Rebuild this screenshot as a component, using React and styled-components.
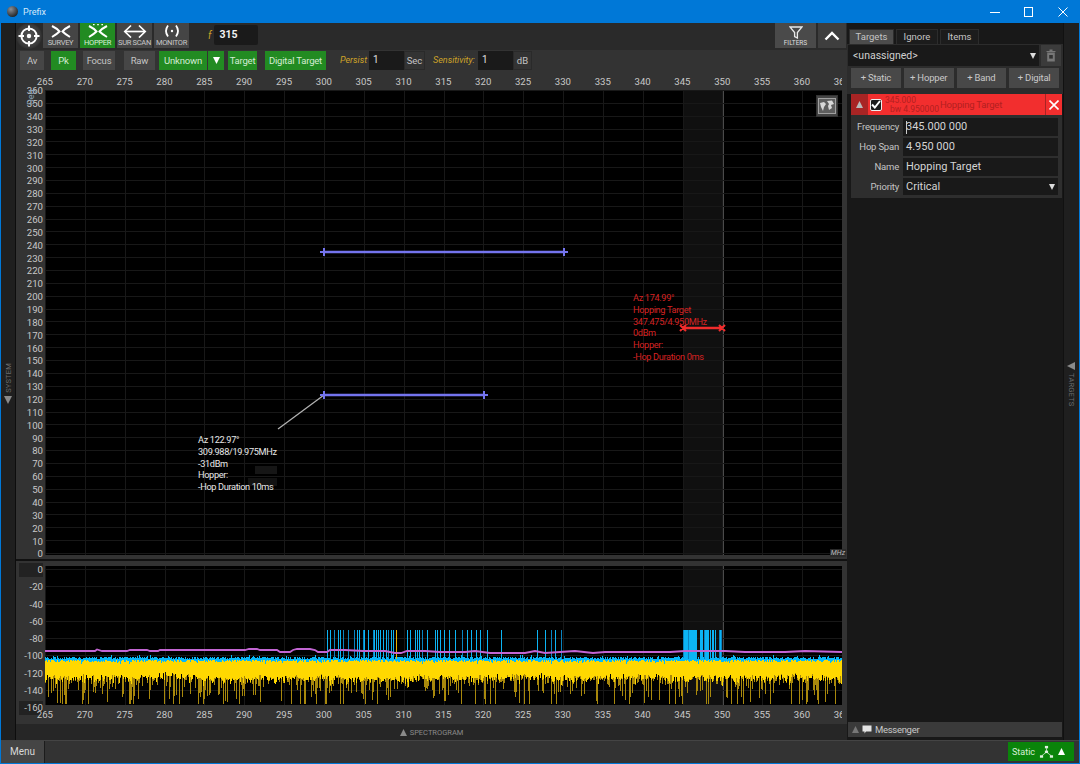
import { useMemo } from "react"
import styled, { createGlobalStyle } from "styled-components"

const GlobalStyle = createGlobalStyle`
  html, body { margin: 0; padding: 0; background: #0078d7; }
  * { box-sizing: border-box; }
`

const FONT = `Roboto, "Noto Sans", sans-serif`
const MHZ_STEP = 39.85
const freqs = Array.from({ length: 21 }, (_, i) => 265 + i * 5)
const degs = Array.from({ length: 37 }, (_, i) => 360 - i * 10)
const dbs = Array.from({ length: 9 }, (_, i) => -i * 20)

// pixel x inside the plot for a frequency
const fx = (f) => (f - 265) * (MHZ_STEP / 5)

const SPIKES = [82, 90, 103, 114, 120, 128, 145, 162, 172, 178, 188, 192, 205, 218, 222, 228, 235, 240, 248, 258,
  265, 272, 280, 322, 330, 345, 350, 358, 365, 380, 405, 412, 420, 432, 448, 465, 485, 500, 512, 527, 540, 562,
  603, 712, 735, 752, 765, 782]

const PINK = [[0, 85], [50, 85], [52, 83.5], [57, 85], [82, 85], [85, 84], [102, 84], [105, 85], [113, 85], [115, 84],
  [200, 84], [204, 83], [212, 83], [215, 84], [232, 84], [235, 86], [245, 86], [248, 84], [252, 83], [265, 83],
  [270, 84], [273, 86], [282, 86], [285, 84], [300, 84], [318, 85], [325, 85], [340, 85], [350, 87], [356, 87],
  [362, 85], [380, 85], [395, 86], [420, 86], [430, 85], [445, 87], [480, 87], [490, 85], [500, 87], [515, 86],
  [530, 85], [548, 87], [560, 86], [580, 86], [600, 86], [625, 86], [640, 85], [680, 85], [700, 86], [740, 86],
  [760, 85], [797, 86]]

function makeRandom(seed) {
  let a = seed
  return () => {
    a = (a + 0x6d2b79f5) | 0
    let t = Math.imul(a ^ (a >>> 15), 1 | a)
    t = (t + Math.imul(t ^ (t >>> 7), 61 | t)) ^ t
    return ((t ^ (t >>> 14)) >>> 0) / 4294967296
  }
}

function buildSpectrum() {
  const r = makeRandom(315)
  let cyan = ""
  let yellow = ""
  let dim = ""
  let drift = 0
  for (let x = 0; x < 797; x++) {
    const px = x + 0.5
    drift = drift * 0.9 + (r() - 0.5) * 1.6
    const top = 93.5 + r() * 2.5 + (r() > 0.95 ? 2 : 0)
    const cyanTop = 90.5 + r() * 2.5 - (r() > 0.93 ? 2 : 0)
    const bottom = 109 + drift + r() * 6 + (r() > 0.8 ? r() * 5 : 0)
    const tail = bottom + Math.pow(r(), 4) * 32
    cyan += `M${px} ${cyanTop.toFixed(1)}V${top.toFixed(1)}`
    yellow += `M${px} ${top.toFixed(1)}V${bottom.toFixed(1)}`
    dim += `M${px} ${bottom.toFixed(1)}V${Math.min(tail, 138).toFixed(1)}`
  }
  return { cyan, yellow, dim }
}

const Window = styled.div`
  width: 1080px;
  height: 764px;
  background: #0078d7;
  display: flex;
  flex-direction: column;
  overflow: hidden;
  font-family: ${FONT};
  color: #cfcfcf;
`
const TitleBar = styled.div`
  height: 23px;
  flex: none;
  display: flex;
  align-items: center;
  padding-left: 7px;
  gap: 5px;
  font-size: 9px;
  color: #d5e8fa;
`
const AppIcon = styled.div`
  width: 11px;
  height: 11px;
  border-radius: 50%;
  background: radial-gradient(circle at 35% 30%, #8a8f96, #24272b 75%);
`
const WindowControls = styled.div`
  margin-left: auto;
  display: flex;
`
const WindowControl = styled.div`
  width: 34px;
  height: 23px;
  display: flex;
  align-items: center;
  justify-content: center;
`
const Body = styled.div`
  height: 717px;
  flex: none;
  display: flex;
  padding: 0 1px;
`
const Rail = styled.div`
  width: 15px;
  flex: none;
  background: #1f1f1f;
  border-right: 1px solid ${(p) => (p.$side === "left" ? "#0d0d0d" : "#1f1f1f")};
  display: flex;
  flex-direction: column;
  align-items: center;
  padding-top: ${(p) => (p.$side === "left" ? "340px" : "339px")};
  gap: 3px;
`
const RailLabel = styled.div`
  writing-mode: vertical-rl;
  transform: ${(p) => (p.$flip ? "rotate(180deg)" : "none")};
  font-size: 7.5px;
  letter-spacing: 0.2px;
  color: #6d6d6d;
`
const Main = styled.div`
  width: 831px;
  flex: none;
  display: flex;
  flex-direction: column;
  background: #222;
`
const Toolbar = styled.div`
  height: 27px;
  flex: none;
  display: flex;
  background: #2a2a2a;
  align-items: flex-start;
`
const TargetButton = styled.div`
  width: 26px;
  height: 26px;
  margin-right: 1px;
  display: flex;
  align-items: center;
  justify-content: center;
  background: radial-gradient(circle, #555 0, #3a3a3a 60%, #2a2a2a 75%);
  border-radius: 50%;
`
const ModeButton = styled.div`
  width: 35px;
  height: 25px;
  margin-right: 2px;
  background: ${(p) => (p.$active ? "#228b22" : "#454545")};
  color: ${(p) => (p.$active ? "#d8f0d8" : "#c8c8c8")};
  display: flex;
  flex-direction: column;
  align-items: center;
  font-size: 7.5px;
  line-height: 9px;
  letter-spacing: -0.3px;
  padding-top: 1px;
  white-space: nowrap;
`
const FreqLabel = styled.span`
  margin: 7px 3px 0 17px;
  font-size: 10px;
  font-style: italic;
  color: #c9a227;
`
const FreqInput = styled.div`
  width: 44px;
  height: 20px;
  margin-top: 2px;
  padding-left: 5px;
  background: #1a1a1a;
  border-radius: 2px;
  color: #f2f2f2;
  font-size: 10.5px;
  font-weight: 700;
  line-height: 19px;
`
const ToolbarRight = styled.div`
  margin-left: auto;
  display: flex;
  gap: 2px;
  padding-right: 1px;
`
const FilterButton = styled.div`
  width: 41px;
  height: 25px;
  background: #4a4a4a;
  display: flex;
  flex-direction: column;
  align-items: center;
  font-size: 6.5px;
  line-height: 8px;
  color: #ddd;
  padding-top: 3px;
`
const CollapseButton = styled.div`
  width: 28px;
  height: 25px;
  background: #3e3e3e;
  display: flex;
  align-items: center;
  justify-content: center;
`
const FilterRow = styled.div`
  height: 22px;
  flex: none;
  background: #333;
  display: flex;
  align-items: flex-start;
  padding-left: 4px;
  padding-top: 1px;
`
const Chip = styled.div`
  width: ${(p) => p.$w}px;
  margin-right: ${(p) => p.$gap ?? 0}px;
  height: 19px;
  line-height: 18px;
  text-align: center;
  font-size: 9.5px;
  letter-spacing: -0.2px;
  white-space: nowrap;
  background: ${(p) => (p.$green ? "#228b22" : "#464646")};
  color: ${(p) => (p.$green ? "#d4ecd4" : "#c4c4c4")};
  display: flex;
  align-items: center;
  justify-content: center;
`
const GoldLabel = styled.span`
  font-size: 9px;
  font-style: italic;
  color: #d0a428;
  line-height: 19px;
  white-space: nowrap;
  width: ${(p) => p.$w}px;
  margin-left: ${(p) => p.$left}px;
`
const NumberInput = styled.div`
  width: 35px;
  height: 19px;
  background: #1a1a1a;
  color: #e0e0e0;
  font-size: 10px;
  line-height: 18px;
  padding-left: 4px;
`
const Unit = styled.div`
  width: ${(p) => p.$w}px;
  height: 19px;
  border: 1px solid #2a2a2a;
  font-size: 9.5px;
  line-height: 17px;
  text-align: center;
  color: #c4c4c4;
`
const ChartPanel = styled.div`
  height: ${(p) => p.$h}px;
  flex: none;
  background: #333;
  display: grid;
  grid-template-columns: 29px 797px;
  grid-template-rows: ${(p) => p.$rows};
  position: relative;
`
const XAxis = styled.div`
  grid-column: 2;
  grid-row: ${(p) => p.$row};
  margin-left: -20px;
  display: flex;
  overflow: hidden;
  align-items: center;
  font-size: 9.6px;
  color: #c8c8c8;
`
const XTick = styled.div`
  flex: 0 0 ${MHZ_STEP}px;
  text-align: center;
`
const YAxis = styled.div`
  grid-column: 1;
  grid-row: 2;
  display: flex;
  flex-direction: column;
  align-items: flex-end;
  margin-top: ${(p) => p.$offset}px;
  font-size: 9.6px;
  line-height: 10px;
  color: #c8c8c8;
`
const YTick = styled.div`
  flex: 0 0 ${(p) => p.$h}px;
  display: flex;
  align-items: center;
  padding-right: 2px;
`
const BoxedTick = styled.div`
  width: 24px;
  height: 14px;
  line-height: 14px;
  text-align: right;
  background: #222;
`
const Plot = styled.div`
  grid-column: 2;
  grid-row: 2;
  position: relative;
  background: #000;
  overflow: hidden;
`
const PlotSvg = styled.svg`
  display: block;
`
const Note = styled.div`
  position: absolute;
  left: ${(p) => p.$x}px;
  top: ${(p) => p.$y}px;
  color: ${(p) => p.$color};
  font-size: 9.2px;
  letter-spacing: -0.35px;
  line-height: 11.8px;
  white-space: pre;
`
const GlobeButton = styled.div`
  position: absolute;
  left: 771px;
  top: 5px;
  width: 22px;
  height: 22px;
  background: #444;
  border: 1px solid #333;
  display: flex;
  align-items: center;
  justify-content: center;
`
const DegLabel = styled.div`
  position: absolute;
  left: 6px;
  top: 19px;
  font-size: 9px;
  color: #8ea4b8;
  transform: rotate(-90deg);
`
const MhzLabel = styled.div`
  position: absolute;
  right: 1px;
  top: 477px;
  font-size: 7px;
  font-style: italic;
  color: #bbb;
  background: #2a2a2a;
  padding: 0 1px;
`
const Separator = styled.div`
  height: 2px;
  flex: none;
  background: #111;
`
const SpectrogramBar = styled.div`
  height: 16px;
  flex: none;
  background: #262626;
  display: flex;
  align-items: center;
  justify-content: center;
  gap: 3px;
  font-size: 7.5px;
  color: #8a8a8a;
`
const Side = styled.div`
  width: 217px;
  flex: none;
  background: #181818;
  border-right: 1px solid #111;
  display: flex;
  flex-direction: column;
  padding-top: 6px;
`
const Tabs = styled.div`
  display: flex;
  gap: 2px;
  padding-left: 2px;
`
const Tab = styled.div`
  width: ${(p) => p.$w}px;
  height: 15px;
  line-height: 14px;
  text-align: center;
  font-size: 9.5px;
  color: #c4c4c4;
  background: ${(p) => (p.$active ? "#4c4c4c" : "#1c1c1c")};
  border: 1px solid #2c2c2c;
  border-bottom: 0;
`
const SelectRow = styled.div`
  display: flex;
  height: 23px;
  background: #2c2c2c;
  padding: 1px 2px 1px 1px;
  gap: 2px;
`
const UnassignedSelect = styled.div`
  flex: 1;
  background: #191919;
  display: flex;
  align-items: center;
  justify-content: space-between;
  padding: 0 3px 0 5px;
  font-size: 10.5px;
  color: #d0d0d0;
`
const TrashButton = styled.div`
  width: 20px;
  background: #3b3b3b;
  display: flex;
  align-items: center;
  justify-content: center;
`
const AddRow = styled.div`
  display: flex;
  gap: 3px;
  background: #2c2c2c;
  padding: 1px 4px 6px;
  height: 27px;
`
const AddButton = styled.div`
  flex: 1;
  background: #484848;
  font-size: 9.5px;
  letter-spacing: -0.2px;
  color: #c8c8c8;
  text-align: center;
  line-height: 19px;
  white-space: nowrap;
`
const Card = styled.div`
  margin: 0 1px 0 4px;
  background: #2e2e2e;
  display: flex;
  flex-direction: column;
`
const CardHeader = styled.div`
  height: 21px;
  background: #f22e2e;
  display: flex;
  align-items: center;
  color: #b32020;
`
const CardToggle = styled.div`
  width: 17px;
  height: 21px;
  background: #a82424;
  display: flex;
  align-items: center;
  justify-content: center;
`
const CheckBox = styled.div`
  width: 12px;
  height: 12px;
  margin: 0 3px 0 2px;
  border-radius: 2px;
  background: #1c1c1c;
  border: 1px solid #eee;
  display: flex;
  align-items: center;
  justify-content: center;
`
const FreqStack = styled.div`
  width: 55px;
  font-size: 8.5px;
  line-height: 9px;
  white-space: nowrap;
`
const BwLine = styled.div`
  padding-left: 5px;
`
const CardTitle = styled.div`
  font-size: 9.5px;
  letter-spacing: -0.2px;
  white-space: nowrap;
`
const CardClose = styled.div`
  margin-left: auto;
  width: 17px;
  height: 21px;
  border-left: 1px solid #a82424;
  display: flex;
  align-items: center;
  justify-content: center;
`
const Fields = styled.div`
  padding: 3px 4px 3px 0;
  display: grid;
  grid-template-columns: 48px 1fr;
  column-gap: 4px;
  row-gap: 2px;
`
const FieldLabel = styled.div`
  font-size: 9.5px;
  letter-spacing: -0.2px;
  line-height: 17px;
  text-align: right;
  color: #c4c4c4;
`
const FieldValue = styled.div`
  height: ${(p) => p.$h ?? 18}px;
  background: #191919;
  font-size: 11px;
  color: #d4d4d4;
  padding: 0 3px;
  line-height: 18px;
  display: flex;
  align-items: center;
  justify-content: space-between;
`
const Caret = styled.span`
  display: inline-block;
  width: 1px;
  height: 13px;
  background: #ccc;
  margin-right: -1px;
  vertical-align: middle;
`
const Messenger = styled.div`
  margin: auto 1px 3px 1px;
  height: 15px;
  background: #3a3a3a;
  display: flex;
  align-items: center;
  padding-left: 4px;
  gap: 3px;
  font-size: 9.5px;
  letter-spacing: -0.3px;
  color: #c8c8c8;
`
const BottomBar = styled.div`
  height: 23px;
  flex: none;
  margin: 0 1px;
  background: #333;
  border-top: 1px solid #444;
  display: flex;
  align-items: stretch;
`
const MenuButton = styled.div`
  width: 44px;
  background: #454545;
  border-right: 1px solid #1c1c1c;
  text-align: center;
  font-size: 10px;
  line-height: 22px;
  color: #d8d8d8;
`
const StaticBadge = styled.div`
  margin: 1px 5px 2px auto;
  width: 66px;
  background: #0a840a;
  display: flex;
  align-items: center;
  padding-left: 4px;
  gap: 4px;
  font-size: 9px;
  color: #d8efd8;
`
const FootSpacer = styled.div`
  height: 1px;
  flex: none;
`

const Triangle = ({ dir = "up", color = "#8a8a8a", size = 7 }) => {
  const d = { up: "M0 7 L3.5 0 L7 7Z", down: "M0 0 L7 0 L3.5 7Z", left: "M7 0 L7 7 L0 3.5Z" }[dir]
  return (
    <svg width={size} height={size} viewBox="0 0 7 7">
      <path d={d} fill={color} />
    </svg>
  )
}

const Chevrons = ({ dots, color = "#fff" }) => (
  <svg width="24" height="14" viewBox="0 0 24 14" fill="none" stroke={color} strokeWidth="2">
    <path d="M3 2 Q8 4.5 10.5 7.5 Q8 10 3 13" />
    <path d="M21 2 Q16 4.5 13.5 7.5 Q16 10 21 13" />
    {dots && <path d="M7 0.5h1.6M11.2 0.5h1.6M15.4 0.5h1.6" strokeWidth="1.4" />}
  </svg>
)

const ScanIcon = () => (
  <svg width="24" height="14" viewBox="0 0 24 14" fill="none" stroke="#fff" strokeWidth="1.7">
    <path d="M2 7.5H22" />
    <path d="M8 1.5L1.8 7.5L8 13.5" />
    <path d="M16 1.5L22.2 7.5L16 13.5" />
  </svg>
)

const MonitorIcon = () => (
  <svg width="20" height="14" viewBox="0 0 20 14" fill="none" stroke="#fff" strokeWidth="1.8">
    <path d="M6 1.5 Q2 7 6 12.5" />
    <path d="M14 1.5 Q18 7 14 12.5" />
    <circle cx="10" cy="7" r="1.2" fill="#fff" stroke="none" />
  </svg>
)

const Crosshair = () => (
  <svg width="22" height="22" viewBox="0 0 22 22" fill="none" stroke="#fff">
    <circle cx="11" cy="11" r="7.6" strokeWidth="2" />
    <circle cx="11" cy="11" r="2.2" fill="#fff" stroke="none" />
    <path d="M11 0.5V6M11 16V21.5M0.5 11H6M16 11H21.5" strokeWidth="2" />
  </svg>
)

const Funnel = () => (
  <svg width="14" height="13" viewBox="0 0 14 13" fill="none" stroke="#e8e8e8" strokeWidth="1.3">
    <path d="M1 1H13L8.4 6.5V12L5.6 10.6V6.5Z" />
  </svg>
)

const Globe = () => (
  <svg width="18" height="16" viewBox="0 0 18 16">
    <rect x="0.5" y="0.5" width="17" height="15" fill="#5e5e5e" stroke="#a0a0a0" />
    <path d="M2 5L6 4L8 6L6 9L5 13L3 9ZM9 3L14 2.5L16 6L13 7L14 10L11 12L10 8L11 6Z" fill="#d8d8d8" />
  </svg>
)

const Trash = () => (
  <svg width="10" height="13" viewBox="0 0 10 13">
    <path d="M0.5 2H9.5V3H0.5ZM3.5 0.5H6.5V2H3.5ZM1.2 3.5H8.8V12.5H1.2Z" fill="#777" />
    <rect x="3.2" y="6" width="3.6" height="3.6" fill="#333" />
  </svg>
)

const Tree = () => (
  <svg width="15" height="14" viewBox="0 0 16 14" fill="#e0f0e0" stroke="#e0f0e0">
    <path d="M8 3V7M8 7L3 11M8 7L13 11" strokeWidth="0.8" />
    <rect x="6.3" y="0.5" width="3.4" height="2.6" stroke="none" />
    <rect x="6.3" y="5.5" width="3.4" height="2.6" stroke="none" />
    <rect x="1" y="10.5" width="3.4" height="2.6" stroke="none" />
    <rect x="11.6" y="10.5" width="3.4" height="2.6" stroke="none" />
  </svg>
)

const ChatIcon = () => (
  <svg width="10" height="9" viewBox="0 0 10 9">
    <path d="M0.5 0.5H9.5V6.5H4L2.5 8.5V6.5H0.5Z" fill="#e4e4e4" />
  </svg>
)

function Grid({ h, rows }) {
  return (
    <g stroke="#181818" shapeRendering="crispEdges">
      {freqs.map((f) => (
        <line key={f} x1={Math.round(fx(f)) + 0.5} x2={Math.round(fx(f)) + 0.5} y1="0" y2={h} />
      ))}
      {rows.map((y) => (
        <line key={y} x1="0" x2="797" y1={Math.round(y) + 0.5} y2={Math.round(y) + 0.5} />
      ))}
    </g>
  )
}

function HopBand({ h }) {
  return (
    <g shapeRendering="crispEdges">
      <rect x="638" y="0" width="40" height={h} fill="#101010" />
      <line x1="638.5" x2="638.5" y1="0" y2={h} stroke="#333" />
      <line x1="678" x2="678" y1="0" y2={h} stroke="#4a4a4a" />
    </g>
  )
}

function HopTrace({ x1, x2, y, color, mark }) {
  const size = mark === "x" ? 3 : 4
  const tick = (x) =>
    mark === "x"
      ? `M${x - size} ${y - size}L${x + size} ${y + size}M${x - size} ${y + size}L${x + size} ${y - size}`
      : `M${x} ${y - size}V${y + size}M${x - size} ${y}H${x + size}`
  return (
    <g stroke={color} fill="none">
      <line x1={x1} x2={x2} y1={y} y2={y} strokeWidth="2.4" />
      <path d={tick(x1) + tick(x2)} strokeWidth="2" />
    </g>
  )
}

function UpperPlot() {
  const rows = degs.map((d) => (360 - d) * 1.286)
  return (
    <Plot>
      <PlotSvg width="797" height="465">
        <HopBand h={465} />
        <Grid h={465} rows={rows} />
        <rect x="210" y="376" width="22" height="8" fill="#161616" />
        <rect x="203" y="388" width="29" height="8" fill="#121212" />
        <line x1="279" y1="305" x2="233" y2="339" stroke="#b4b4b4" strokeWidth="1.2" />
        <HopTrace x1={279} x2={519} y={162} color="#7474ee" mark="+" />
        <HopTrace x1={279} x2={439} y={305} color="#7474ee" mark="+" />
        <HopTrace x1={638} x2={677} y={238} color="#f02c2c" mark="x" />
      </PlotSvg>
      <Note $x={153} $y={344} $color="#e8e8e8">
        {"Az 122.97°\n309.988/19.975MHz\n-31dBm\nHopper:\n-Hop Duration 10ms"}
      </Note>
      <Note $x={588} $y={202} $color="#d42222">
        {"Az 174.99°\nHopping Target\n347.475/4.950MHz\n0dBm\nHopper:\n-Hop Duration 0ms"}
      </Note>
      <GlobeButton>
        <Globe />
      </GlobeButton>
    </Plot>
  )
}

function LowerPlot() {
  const rows = dbs.map((_, i) => 3 + i * 17.25)
  const spectrum = useMemo(buildSpectrum, [])
  const spikes = useMemo(() => {
    const r = makeRandom(77)
    const sparse = SPIKES.map((z) => ({ x: Math.round(255 + z / 3) + 0.5, dim: r() > 0.65 }))
    const dense = []
    for (let x = 638; x < 677; x++) if (r() > 0.22) dense.push({ x: x + 0.5, dim: r() > 0.7 })
    return [...sparse, ...dense]
  }, [])
  const pink = PINK.map(([x, y]) => `${x},${y}`).join(" ")
  return (
    <Plot>
      <PlotSvg width="797" height="139">
        <HopBand h={139} />
        <Grid h={139} rows={rows} />
        <g shapeRendering="crispEdges">
          {spikes.map((s) => (
            <line key={s.x} x1={s.x} x2={s.x} y1="64" y2="94" stroke={s.dim ? "#0a84c0" : "#0cb4f4"} />
          ))}
          <line x1="351.5" x2="351.5" y1="64" y2="96" stroke="#e8b400" />
        </g>
        <polyline points={pink} fill="none" stroke="#c265d2" strokeWidth="1.8" />
        <g shapeRendering="crispEdges" fill="none">
          <path d={spectrum.cyan} stroke="#08b8f8" />
          <path d={spectrum.dim} stroke="#a8880c" />
          <path d={spectrum.yellow} stroke="#ffd800" />
        </g>
      </PlotSvg>
    </Plot>
  )
}

export default function App() {
  return (
    <Window>
      <GlobalStyle />
      <TitleBar>
        <AppIcon />
        Prefix
        <WindowControls>
          <WindowControl>
            <svg width="10" height="10"><path d="M0 5.5H10" stroke="#fff" /></svg>
          </WindowControl>
          <WindowControl>
            <svg width="10" height="10"><rect x="0.5" y="0.5" width="8" height="9" fill="none" stroke="#fff" /></svg>
          </WindowControl>
          <WindowControl>
            <svg width="10" height="10"><path d="M0.5 0.5L9.5 9.5M9.5 0.5L0.5 9.5" stroke="#fff" /></svg>
          </WindowControl>
        </WindowControls>
      </TitleBar>
      <Body>
        <Rail $side="left">
          <RailLabel $flip>SYSTEM</RailLabel>
          <Triangle dir="down" color="#8a8a8a" size={8} />
        </Rail>
        <Main>
          <Toolbar>
            <TargetButton>
              <Crosshair />
            </TargetButton>
            <ModeButton>
              <Chevrons />
              SURVEY
            </ModeButton>
            <ModeButton $active>
              <Chevrons dots />
              HOPPER
            </ModeButton>
            <ModeButton>
              <ScanIcon />
              SUR SCAN
            </ModeButton>
            <ModeButton>
              <MonitorIcon />
              MONITOR
            </ModeButton>
            <FreqLabel>f</FreqLabel>
            <FreqInput>315</FreqInput>
            <ToolbarRight>
              <FilterButton>
                <Funnel />
                FILTERS
              </FilterButton>
              <CollapseButton>
                <svg width="16" height="10" viewBox="0 0 16 10" fill="none" stroke="#fff" strokeWidth="2.4">
                  <path d="M1.5 8.5L8 2L14.5 8.5" />
                </svg>
              </CollapseButton>
            </ToolbarRight>
          </Toolbar>
          <FilterRow>
            <Chip $w={24} $gap={7}>Av</Chip>
            <Chip $w={25} $gap={7} $green>Pk</Chip>
            <Chip $w={32} $gap={9}>Focus</Chip>
            <Chip $w={31} $gap={4}>Raw</Chip>
            <Chip $w={48} $gap={1} $green>Unknown</Chip>
            <Chip $w={16} $gap={4} $green><Triangle dir="down" color="#fff" /></Chip>
            <Chip $w={29} $gap={8} $green>Target</Chip>
            <Chip $w={61} $green>Digital Target</Chip>
            <GoldLabel $left={14} $w={29}>Persist</GoldLabel>
            <NumberInput>1</NumberInput>
            <Unit $w={21}>Sec</Unit>
            <GoldLabel $left={8} $w={45}>Sensitivity:</GoldLabel>
            <NumberInput>1</NumberInput>
            <Unit $w={19}>dB</Unit>
          </FilterRow>
          <ChartPanel $h={487} $rows="18px 465px 4px">
            <XAxis $row={1}>
              {freqs.map((f) => <XTick key={f}>{f}</XTick>)}
            </XAxis>
            <YAxis $offset={-5}>
              {degs.map((d) => <YTick key={d} $h={12.86}>{d}</YTick>)}
            </YAxis>
            <UpperPlot />
            <DegLabel>Deg.</DegLabel>
            <MhzLabel>MHz</MhzLabel>
          </ChartPanel>
          <Separator />
          <ChartPanel $h={163} $rows="5px 139px 19px">
            <YAxis $offset={-4.6}>
              {dbs.map((d, i) => (
                <YTick key={d} $h={17.25}>
                  {i === 0 || i === 8 ? <BoxedTick>{d}</BoxedTick> : d}
                </YTick>
              ))}
            </YAxis>
            <LowerPlot />
            <XAxis $row={3}>
              {freqs.map((f) => <XTick key={f}>{f}</XTick>)}
            </XAxis>
          </ChartPanel>
          <SpectrogramBar>
            <Triangle color="#8a8a8a" />
            SPECTROGRAM
          </SpectrogramBar>
        </Main>
        <Side>
          <Tabs>
            <Tab $w={45} $active>Targets</Tab>
            <Tab $w={42}>Ignore</Tab>
            <Tab $w={39}>Items</Tab>
          </Tabs>
          <SelectRow>
            <UnassignedSelect>
              {"<unassigned>"}
              <Triangle dir="down" color="#ddd" size={6} />
            </UnassignedSelect>
            <TrashButton>
              <Trash />
            </TrashButton>
          </SelectRow>
          <AddRow>
            <AddButton>+ Static</AddButton>
            <AddButton>+ Hopper</AddButton>
            <AddButton>+ Band</AddButton>
            <AddButton>+ Digital</AddButton>
          </AddRow>
          <Card>
            <CardHeader>
              <CardToggle>
                <Triangle color="#b9b9b9" />
              </CardToggle>
              <CheckBox>
                <svg width="10" height="9" viewBox="0 0 10 9" fill="none" stroke="#fff" strokeWidth="2">
                  <path d="M1 4.5L3.8 7.5L9 1" />
                </svg>
              </CheckBox>
              <FreqStack>
                345.000
                <BwLine>bw 4.950000</BwLine>
              </FreqStack>
              <CardTitle>Hopping Target</CardTitle>
              <CardClose>
                <svg width="10" height="10" fill="none" stroke="#fff" strokeWidth="1.6">
                  <path d="M0.5 0.5L9.5 9.5M9.5 0.5L0.5 9.5" />
                </svg>
              </CardClose>
            </CardHeader>
            <Fields>
              <FieldLabel>Frequency</FieldLabel>
              <FieldValue><span><Caret />345.000 000</span></FieldValue>
              <FieldLabel>Hop Span</FieldLabel>
              <FieldValue>4.950 000</FieldValue>
              <FieldLabel>Name</FieldLabel>
              <FieldValue>Hopping Target</FieldValue>
              <FieldLabel>Priority</FieldLabel>
              <FieldValue $h={17}>
                Critical
                <Triangle dir="down" color="#ddd" size={6} />
              </FieldValue>
            </Fields>
          </Card>
          <Messenger>
            <Triangle color="#777" />
            <ChatIcon />
            Messenger
          </Messenger>
        </Side>
        <Rail $side="right">
          <Triangle dir="left" color="#8a8a8a" size={8} />
          <RailLabel>TARGETS</RailLabel>
        </Rail>
      </Body>
      <BottomBar>
        <MenuButton>Menu</MenuButton>
        <StaticBadge>
          Static
          <Tree />
          <Triangle color="#fff" />
        </StaticBadge>
      </BottomBar>
      <FootSpacer />
    </Window>
  )
}
